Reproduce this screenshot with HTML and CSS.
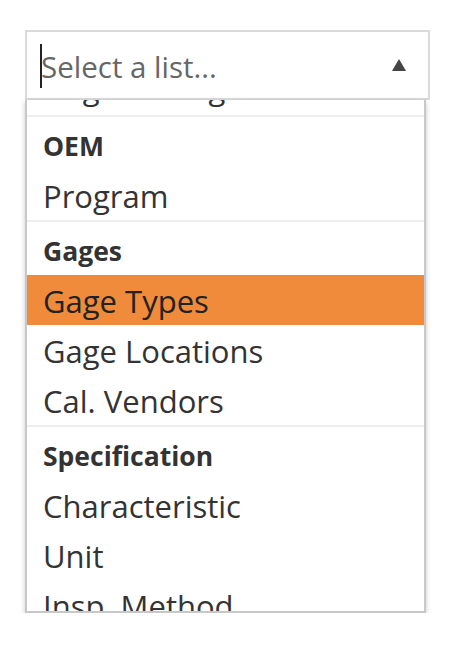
FILE: index.html
```html
<!DOCTYPE html>
<html>
<head>
<meta charset="utf-8">
<link rel="stylesheet" href="styles.css">
</head>
<body>
<div class="wrap">
  <div class="select">
    <span class="caret"></span>
    <span class="placeholder">Select a list...</span>
    <svg class="arrow" width="14" height="12" viewBox="0 0 14 12"><polygon points="7,0 14,12 0,12" fill="#444"/></svg>
  </div>
  <div class="dropdown">
    <div class="results">
      <div class="opt first">Gage Setting</div>
      <div class="group">
        <div class="group-label">OEM</div>
        <div class="opt">Program</div>
      </div>
      <div class="group">
        <div class="group-label">Gages</div>
        <div class="opt active">Gage Types</div>
        <div class="opt">Gage Locations</div>
        <div class="opt">Cal. Vendors</div>
      </div>
      <div class="group">
        <div class="group-label">Specification</div>
        <div class="opt">Characteristic</div>
        <div class="opt">Unit</div>
        <div class="opt">Insp. Method</div>
      </div>
    </div>
  </div>
</div>
</body>
</html>
```
FILE: styles.css
```css
html, body {
  margin: 0;
  padding: 0;
  background: #fff;
}
body {
  font-family: "Open Sans", "DejaVu Sans", sans-serif;
}
.wrap {
  padding: 30px 0 0 25px;
}
.select {
  width: 405px;
  height: 70px;
  box-sizing: border-box;
  border: 2px solid #dadada;
  display: flex;
  align-items: center;
  padding: 0 22px 0 13px;
}
.caret {
  display: inline-block;
  width: 2px;
  height: 44px;
  background: #222;
  margin-top: 2px;
}
.placeholder {
  flex: 1;
  font-size: 29.5px;
  color: #666;
  line-height: 40px;
  margin-left: -1px;
  margin-top: 3px;
}
.arrow {
  display: block;
}
.dropdown {
  width: 401px;
  height: 513px;
  box-sizing: border-box;
  border: 2px solid #c8c8c8;
  border-top: none;
  box-shadow: 0 2px 5px rgba(0, 0, 0, 0.22);
  overflow: hidden;
  background: #fff;
}
.results {
  margin-top: -38px;
}
.opt {
  padding: 8px 16px 6px 16px;
  line-height: 36px;
  font-size: 31px;
  color: #333;
  white-space: nowrap;
}
.opt.first {
  padding-bottom: 9px;
}
.opt.active {
  background: #ef8b3b;
  color: #222;
}
.group {
  border-top: 2px solid #eeeeee;
}
.group-label {
  font-weight: 700;
  font-size: 26.5px;
  color: #333;
  padding: 12px 16px 7px 16px;
  line-height: 34px;
}
```
